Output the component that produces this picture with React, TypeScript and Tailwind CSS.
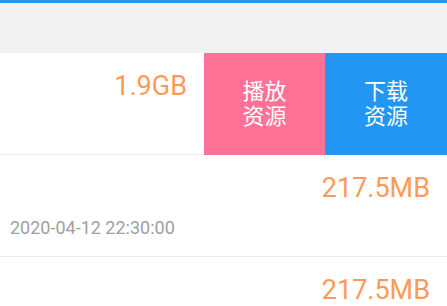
import React from "react";

type Item = { size: string; time: string };

const items: Item[] = [
  { size: "217.5MB", time: "2020-04-12 22:30:00" },
  { size: "217.5MB", time: "2020-04-12 22:30:00" },
];

const latin = "font-['Roboto','Noto_Sans_CJK_SC',sans-serif]";

function ResourceRow({ item }: { item: Item }) {
  return (
    <div className="flex h-[102px] flex-col justify-between border-b border-[#ececec] bg-white pl-[10px] pr-[17px] pt-[20px] pb-[19px]">
      <div className="text-right text-[27px] leading-none text-[#fd9a57]">{item.size}</div>
      <div className="text-[18px] leading-none text-[#a0a0a0]">{item.time}</div>
    </div>
  );
}

export default function App() {
  return (
    <div className={`h-[306px] w-[447px] overflow-hidden bg-white ${latin}`}>
      <div className="h-[3px] bg-[#2196f3]" />
      <div className="h-[50px] bg-[#f2f2f2]" />

      {/* swiped row with actions */}
      <div className="flex h-[102px]">
        <div className="flex-1 border-b border-[#ececec] bg-white pr-[17px] pt-[20px] text-right text-[27px] leading-none text-[#fd9a57]">
          1.9GB
        </div>
        <button className="flex w-[121px] flex-col items-center justify-center bg-[#fe7298] text-[22px] leading-[25px] text-white">
          <span>播放</span>
          <span>资源</span>
        </button>
        <button className="flex w-[122px] flex-col items-center justify-center bg-[#2196f3] text-[22px] leading-[25px] text-white">
          <span>下载</span>
          <span>资源</span>
        </button>
      </div>

      {items.map((item, i) => (
        <ResourceRow key={i} item={item} />
      ))}
    </div>
  );
}
